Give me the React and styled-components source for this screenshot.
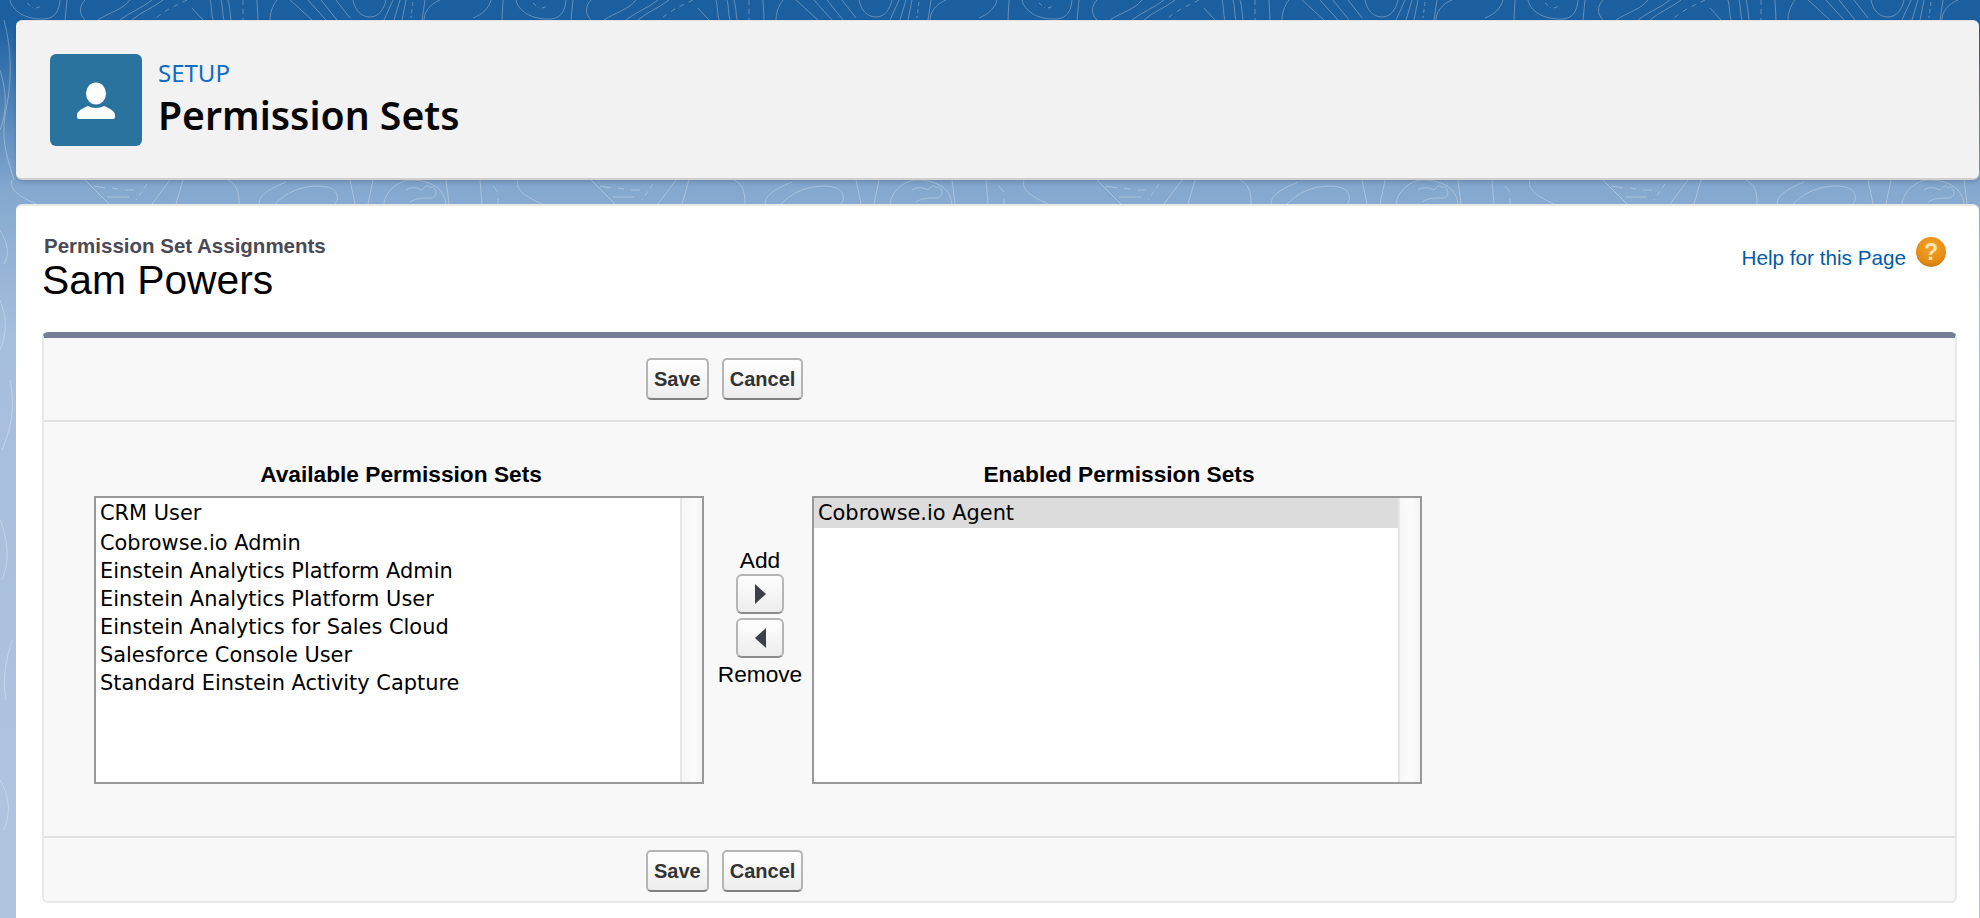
import styled, { createGlobalStyle } from 'styled-components';

const available = [
  'CRM User',
  'Cobrowse.io Admin',
  'Einstein Analytics Platform Admin',
  'Einstein Analytics Platform User',
  'Einstein Analytics for Sales Cloud',
  'Salesforce Console User',
  'Standard Einstein Activity Capture',
];

const GlobalStyle = createGlobalStyle`
  html, body {
    margin: 0;
    height: 100%;
    overflow: hidden;
  }
  body {
    font-family: "Liberation Sans", Arial, sans-serif;
    color: #000;
  }
`;

function Contours() {
  return (
    <StyledContours aria-hidden="true">
      <defs>
        <pattern id="topo" width="506" height="918" patternUnits="userSpaceOnUse">
          <g fill="none" stroke="#fff" strokeWidth="1">
            <path d="M10 0c2 10 14 20 35 19 10-1 14-8 15-19" />
            <path d="M27 3l6 5M36 8l6-2" strokeDasharray="4 3" />
            <path d="M67 0l-2 20M85 0c-6 6-6 14 0 20M130 0c-8 10-20 12-32 20M152 0c-10 8-22 12-32 20M163 0c-10 8-22 12-31 20" />
            <path d="M187 0c-10 5-22 10-31 18" strokeDasharray="5 5" />
            <path d="M192 8l11 12M210 0c2 6 1 14 3 20M221 0c2 6 1 14 3 20M228 0c2 6 2 14 3 20M257 0l1 20M277 0c-5 6-7 14-7 20" />
            <path d="M243 0v20" strokeDasharray="5 4" />
            <path d="M290 0l22 20M308 0l18 20M321 0l16 20M336 0l14 18" />
            <path d="M353 0c2 10 8 17 17 17s14-8 16-17M393 0l-9 20M400 0l-6 20M406 0l-4 20M425 0l-3 20" />
            <path d="M413 2l-2 16" strokeDasharray="4 3" />
            <path d="M440 0c-10 4-16 12-16 20M491 0c-2 8-8 14-18 18M503 0l-1 20" />

            <path d="M85 180l24 24M94 186l11 2M112 188l6 1M125 190l9 0M107 197l22 0" />
            <path d="M147 184l-11 16" strokeDasharray="5 4" />
            <path d="M170 180l-18 24M183 180l-7 24M228 180c8 4 11 10 11 24M259 204c0-8 8-14 27-22" />
            <path d="M275 204c6-6 14-12 24-15 16-5 36-4 38 6 1 4 0 7-2 9M350 180l5 24M373 180l-5 24" />
            <path d="M384 204c1-12 14-24 27-24 16 0 33 6 35 24M406 190c6-4 12-2 16 0 4-4 6-6 8-2 2-2 4-2 6 4 0 4-2 6-6 6-8 0-14 0-20 4M446 180l3 24M480 180l2 24" />
            <path d="M493 186l5 6M498 198v6" />
            <path d="M12 180c-2 8 2 14 24 24" />

            <path d="M4 20c8 30 8 60 2 90s2 50 8 70" />
            <path d="M0 70c6 20 8 40 0 60M0 230c8 14 10 24 4 34M0 300c6 16 8 30 0 50M10 380c6 30 0 50-8 70M0 520c8 20 10 40 2 60M12 640c-6 20-10 40-6 60M0 780c8 14 12 30 4 50" />
          </g>
        </pattern>
      </defs>
      <rect width="100%" height="100%" fill="url(#topo)" opacity="0.3" />
    </StyledContours>
  );
}

function UserIcon() {
  return (
    <svg width="40" height="40" viewBox="0 0 40 40" fill="#fff">
      <ellipse cx="20" cy="13.5" rx="10" ry="11" />
      <path d="M3 39a2 2 0 0 1-2-2v-2c0-4 6-7 11-9 2 1 5 2 8 2s6-1 8-2c5 2 11 5 11 9v2a2 2 0 0 1-2 2z" />
    </svg>
  );
}

function Arrow({ dir }) {
  return (
    <svg width="11" height="20" viewBox="0 0 11 20" fill="#3c3f47">
      <path d={dir === 'right' ? 'M0 0l11 10L0 20z' : 'M11 0L0 10l11 10z'} />
    </svg>
  );
}

function ActionRow({ footer }) {
  return (
    <StyledActionRow $footer={footer}>
      <StyledButton type="button">Save</StyledButton>
      <StyledButton type="button">Cancel</StyledButton>
    </StyledActionRow>
  );
}

function PickList({ title, items, selected }) {
  return (
    <StyledColumn>
      <StyledColumnTitle>{title}</StyledColumnTitle>
      <StyledList>
        <StyledOptions>
          {items.map((item, i) => (
            <StyledOption key={item} $first={i === 0} $selected={item === selected}>
              {item}
            </StyledOption>
          ))}
        </StyledOptions>
        <StyledScrollbar />
      </StyledList>
    </StyledColumn>
  );
}

export default function App() {
  return (
    <StyledPage>
      <GlobalStyle />
      <Contours />
      <StyledHeaderCard>
        <StyledIconTile>
          <UserIcon />
        </StyledIconTile>
        <StyledHeaderText>
          <StyledEyebrow>SETUP</StyledEyebrow>
          <StyledPageTitle>Permission Sets</StyledPageTitle>
        </StyledHeaderText>
      </StyledHeaderCard>

      <StyledContentCard>
        <StyledTitleBar>
          <div>
            <StyledSubject>Permission Set Assignments</StyledSubject>
            <StyledName>Sam Powers</StyledName>
          </div>
          <StyledHelp>
            <StyledHelpLink href="#help">Help for this Page</StyledHelpLink>
            <StyledHelpBadge>?</StyledHelpBadge>
          </StyledHelp>
        </StyledTitleBar>

        <StyledPanel>
          <ActionRow />
          <StyledPickers>
            <PickList title="Available Permission Sets" items={available} />
            <StyledMover>
              <StyledMoverLabel>Add</StyledMoverLabel>
              <StyledArrowButton type="button" aria-label="Add">
                <Arrow dir="right" />
              </StyledArrowButton>
              <StyledArrowButton type="button" aria-label="Remove">
                <Arrow dir="left" />
              </StyledArrowButton>
              <StyledRemoveLabel>Remove</StyledRemoveLabel>
            </StyledMover>
            <PickList
              title="Enabled Permission Sets"
              items={['Cobrowse.io Agent']}
              selected="Cobrowse.io Agent"
            />
          </StyledPickers>
          <ActionRow footer />
        </StyledPanel>
      </StyledContentCard>
    </StyledPage>
  );
}

const StyledPage = styled.div`
  position: relative;
  display: flex;
  flex-direction: column;
  gap: 24px;
  height: 918px;
  padding: 20px 1px 0 16px;
  box-sizing: border-box;
  overflow: hidden;
  background: linear-gradient(
    to bottom,
    #1b5f9e 0,
    #1d60a0 24px,
    #85a8cf 190px,
    #a6bfdd 340px,
    #b0c4df 918px
  );
`;

const StyledContours = styled.svg`
  position: absolute;
  top: 0;
  left: 0;
  width: 100%;
  height: 100%;
`;

const StyledHeaderCard = styled.header`
  position: relative;
  display: flex;
  flex: none;
  gap: 16px;
  height: 160px;
  padding: 33px 34px 0;
  box-sizing: border-box;
  background: #f2f2f2;
  border-top: 1px solid #dfe3e8;
  border-bottom: 2px solid #cfcfcf;
  border-radius: 6px;
  box-shadow: 0 2px 4px rgba(0, 0, 0, 0.16);
`;

const StyledIconTile = styled.div`
  display: flex;
  flex: none;
  align-items: center;
  justify-content: center;
  width: 92px;
  height: 92px;
  background: #2a739e;
  border-radius: 6px;
`;

const StyledHeaderText = styled.div`
  display: flex;
  flex-direction: column;
  padding-top: 4px;
  font-family: "Noto Sans", sans-serif;
`;

const StyledEyebrow = styled.div`
  font-size: 24px;
  line-height: 30px;
  color: #0b6dc2;
`;

const StyledPageTitle = styled.h1`
  margin: 3px 0 0;
  font-size: 39.2px;
  font-weight: 600;
  line-height: 48px;
  color: #080707;
`;

const StyledContentCard = styled.main`
  position: relative;
  flex: 1;
  padding: 0 22px 0 26px;
  background: #fff;
  border-top: 2px solid #e6e8ea;
  border-radius: 6px 6px 0 0;
`;

const StyledTitleBar = styled.div`
  display: flex;
  justify-content: space-between;
  height: 126px;
  padding-top: 28px;
  box-sizing: border-box;
`;

const StyledSubject = styled.div`
  margin-left: 2px;
  font-size: 20.5px;
  font-weight: 700;
  line-height: 24px;
  color: #4a4a56;
`;

const StyledName = styled.h2`
  margin: -1px 0 0;
  font-size: 40.8px;
  font-weight: 400;
  line-height: 46px;
`;

const StyledHelp = styled.div`
  display: flex;
  align-items: flex-start;
  gap: 10px;
  margin-right: 11px;
`;

const StyledHelpLink = styled.a`
  margin-top: 11px;
  font-size: 20.7px;
  line-height: 26px;
  color: #015ba7;
  text-decoration: none;
`;

const StyledHelpBadge = styled.span`
  display: flex;
  align-items: center;
  justify-content: center;
  width: 30px;
  height: 30px;
  margin-top: 3px;
  font-size: 23px;
  font-weight: 700;
  color: #fde3b4;
  background: radial-gradient(circle at 50% 35%, #f4a42c 0, #e58c12 60%, #ad6a14 100%);
  border-radius: 50%;
`;

const StyledPanel = styled.section`
  height: 571px;
  box-sizing: border-box;
  background: #f8f8f8;
  border: solid #e8e8e8;
  border-width: 6px 2px 2px;
  border-top-color: #757d97;
  border-radius: 6px;
`;

const StyledActionRow = styled.div`
  display: flex;
  gap: 13px;
  height: ${p => (p.$footer ? '63px' : '82px')};
  padding: ${p => (p.$footer ? '12px' : '20px')} 0 0 602px;
  box-sizing: border-box;
`;

const StyledButton = styled.button`
  height: 42px;
  padding: 0 6px;
  font-family: "Liberation Sans", Arial, sans-serif;
  font-size: 20px;
  font-weight: 700;
  color: #333;
  background: linear-gradient(to bottom, #fff, #ededed);
  border: 2px solid #b5b5b5;
  border-bottom-color: #7f7f7f;
  border-radius: 5px;
`;

const StyledPickers = styled.div`
  display: flex;
  height: 418px;
  padding: 39px 0 0 50px;
  box-sizing: border-box;
  border-top: 2px solid #e0e0e0;
  border-bottom: 2px solid #e0e0e0;
`;

const StyledColumn = styled.div`
  width: 610px;
`;

const StyledColumnTitle = styled.div`
  height: 35px;
  padding-left: 4px;
  font-size: 22.7px;
  font-weight: 700;
  line-height: 26px;
  text-align: center;
`;

const StyledList = styled.div`
  display: flex;
  height: 288px;
  box-sizing: border-box;
  background: #fff;
  border: 2px solid #999;
`;

const StyledOptions = styled.div`
  flex: 1;
`;

const StyledOption = styled.div`
  height: ${p => (p.$first ? '30px' : '28px')};
  padding-left: 4px;
  font-family: "DejaVu Sans", sans-serif;
  font-size: 20.9px;
  line-height: 31px;
  background: ${p => (p.$selected ? '#dcdcdc' : 'transparent')};
`;

const StyledScrollbar = styled.div`
  width: 20px;
  background: linear-gradient(to right, #f7f7f7, #fbfbfb 60%, #f4f4f4);
  border-left: 2px solid #e6e6e6;
`;

const StyledMover = styled.div`
  display: flex;
  flex-direction: column;
  align-items: center;
  width: 108px;
  padding: 87px 0 0 4px;
  box-sizing: border-box;
`;

const StyledMoverLabel = styled.div`
  font-size: 22.7px;
  line-height: 24px;
`;

const StyledRemoveLabel = styled(StyledMoverLabel)`
  margin-top: 2px;
`;

const StyledArrowButton = styled.button`
  display: flex;
  flex: none;
  align-items: center;
  justify-content: center;
  width: 48px;
  height: 40px;
  margin: 2px 0;
  padding: 0;
  background: linear-gradient(to bottom, #fff, #ededed);
  border: 2px solid #b5b5b5;
  border-bottom-color: #8c8c8c;
  border-radius: 6px;
`;
